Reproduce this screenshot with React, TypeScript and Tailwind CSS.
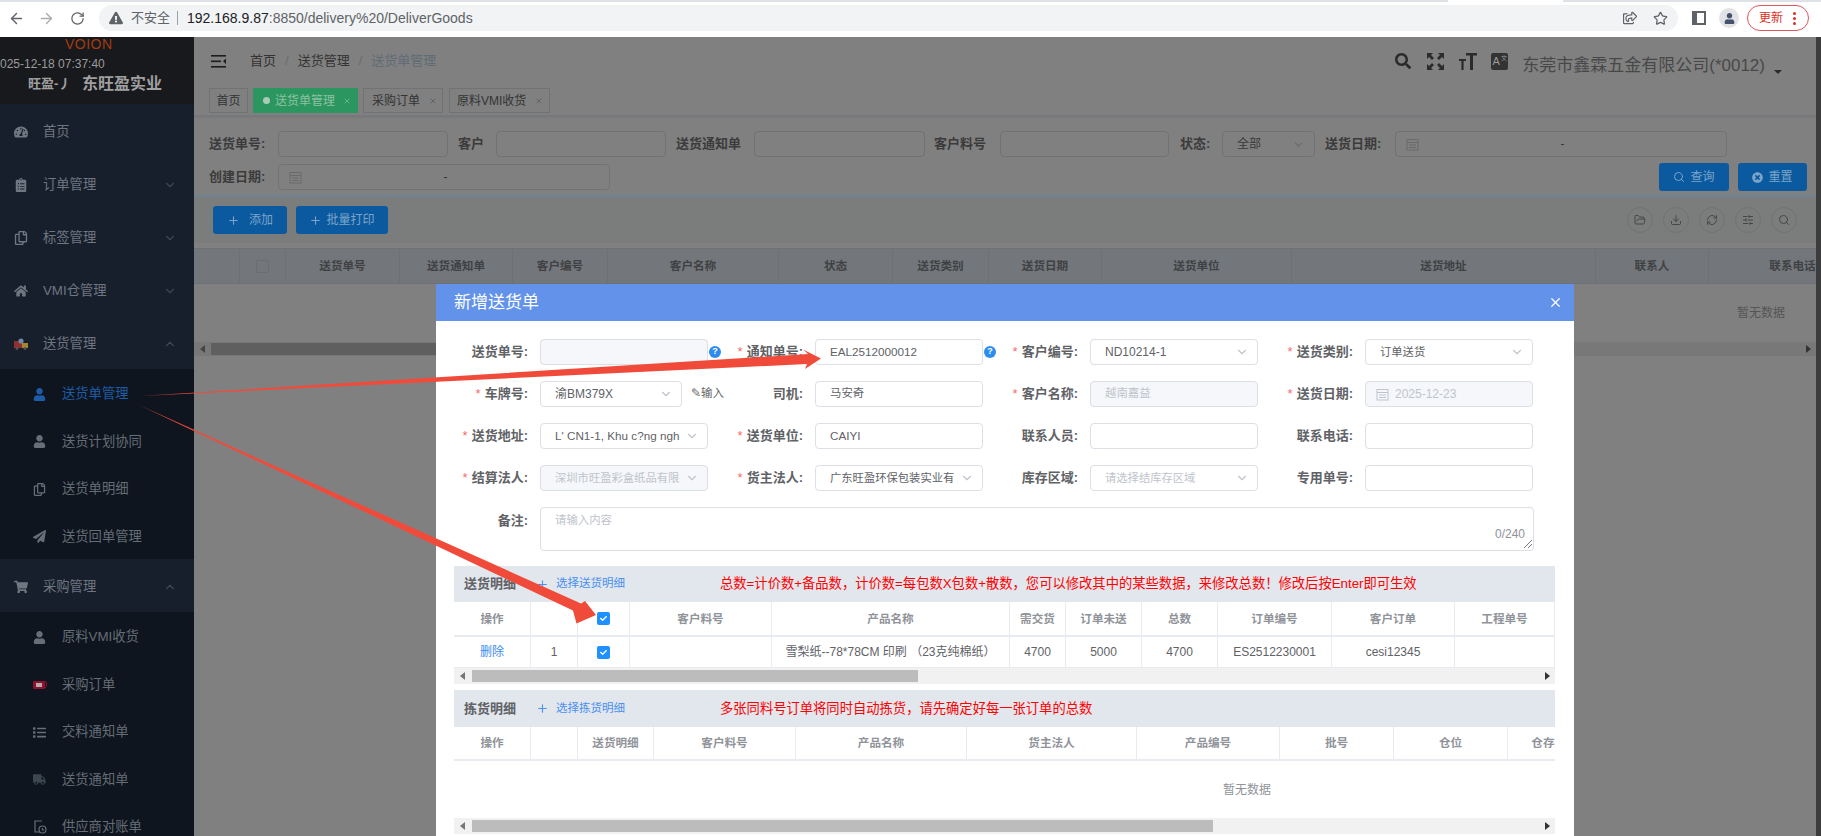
import { ArrowLeft, ArrowRight, ChevronDown, ChevronUp, Download, FolderOpen, Plus, RefreshCw, RotateCw, Search, SlidersHorizontal, Star, X } from "lucide-react";
import { ReactNode } from "react";
import { FaCheck, FaClipboardList, FaExclamationTriangle, FaHome, FaList, FaPaperPlane, FaRegCopy, FaRegShareSquare, FaSearch, FaShoppingCart, FaTachometerAlt, FaTimesCircle, FaTruck, FaUser } from "react-icons/fa";

// Small multi-colour drawings that the icon packages don't have
const DeliveryIcon = () => (
  <svg width="14" height="12" viewBox="0 0 14 12">
    <rect x="0" y="3" width="8" height="7" fill="#8f2f2f" />
    <rect x="8" y="5" width="6" height="5" fill="#a8852f" />
    <circle cx="7" cy="3" r="2.6" fill="#6f8aa8" />
    <circle cx="3" cy="10.5" r="1.4" fill="#555" />
    <circle cx="11" cy="10.5" r="1.4" fill="#555" />
  </svg>
);

const OrderIcon = () => (
  <svg width="14" height="10" viewBox="0 0 14 10">
    <rect x="0" y="1" width="12" height="8" rx="1" fill="#8c1230" />
    <rect x="3" y="3" width="6" height="4" fill="#b9a9a9" />
    <path d="M12 1c2 1 2 5 0 7" stroke="#8c1230" fill="none" />
  </svg>
);

const StatementIcon = () => (
  <svg width="14" height="14" viewBox="0 0 14 14" fill="none" stroke="#666e78" strokeWidth="1.2">
    <path d="M9 1H2v11h5" />
    <circle cx="9.5" cy="9.5" r="3.5" />
    <path d="M9.5 8v2h1.5" />
  </svg>
);

const mainMenu = [
  { label: "首页", icon: <FaTachometerAlt size={14} /> },
  { label: "订单管理", icon: <FaClipboardList size={14} />, arrow: "down" },
  { label: "标签管理", icon: <FaRegCopy size={14} />, arrow: "down" },
  { label: "VMI仓管理", icon: <FaHome size={14} />, arrow: "down" },
];

const deliveryMenu = [
  { label: "送货单管理", icon: <FaUser size={13} />, active: true },
  { label: "送货计划协同", icon: <FaUser size={13} /> },
  { label: "送货单明细", icon: <FaRegCopy size={13} /> },
  { label: "送货回单管理", icon: <FaPaperPlane size={13} /> },
];

const purchaseMenu = [
  { label: "原料VMI收货", icon: <FaUser size={13} /> },
  { label: "采购订单", icon: <OrderIcon /> },
  { label: "交料通知单", icon: <FaList size={13} /> },
  { label: "送货通知单", icon: <FaTruck size={13} className="text-[#3c4650]" /> },
  { label: "供应商对账单", icon: <StatementIcon /> },
];

const MenuHeader = ({ label, icon, arrow }: { label: string; icon: ReactNode; arrow?: string }) => (
  <div className="flex h-[53px] items-center bg-[#181f2c] pl-[14px] pr-[17px] pt-[2px] text-[13.3px] text-[#6e7680]">
    <span className="flex w-[29px] shrink-0 text-[#6f7882]">{icon}</span>
    <span className="flex-1">{label}</span>
    {arrow === "down" && <ChevronDown size={14} className="text-[#3e4753]" />}
    {arrow === "up" && <ChevronUp size={14} className="text-[#3e4753]" />}
  </div>
);

const SubItem = ({ label, icon, active }: { label: string; icon: ReactNode; active?: boolean }) => (
  <div className={`flex h-[47.5px] items-center pl-[33px] pt-[3px] text-[13.3px] ${active ? "text-[#1d5ca6]" : "text-[#656d76]"}`}>
    <span className={`flex w-[29px] shrink-0 ${active ? "text-[#1d5ca6]" : "text-[#666e78]"}`}>{icon}</span>
    <span>{label}</span>
  </div>
);

const Sidebar = () => (
  <aside className="w-[194px] shrink-0 overflow-hidden bg-[#181f2c]">
    <div className="h-[67px] overflow-hidden bg-[#18191d]">
      <div className="h-[14px] pl-[65px] text-[14px] leading-[14px] tracking-[0.5px] text-[#a23c12]">VOION</div>
      <div className="mt-[6px] h-[14px] whitespace-nowrap text-[12px] leading-[14px] text-[#9b9b9b]">025-12-18 07:37:40</div>
      <div className="mt-[4px] flex items-center whitespace-nowrap pl-[28px] font-bold leading-[18px] text-[#a0a0a0]">
        <span className="w-[54px] text-[13px]">旺盈-丿</span>
        <span className="text-[16px]">东旺盈实业</span>
      </div>
    </div>
    {mainMenu.map((item) => (
      <MenuHeader key={item.label} {...item} />
    ))}
    <MenuHeader label="送货管理" icon={<DeliveryIcon />} arrow="up" />
    <div className="bg-[#0f151e]">
      {deliveryMenu.map((item) => (
        <SubItem key={item.label} {...item} />
      ))}
    </div>
    <MenuHeader label="采购管理" icon={<FaShoppingCart size={14} />} arrow="up" />
    <div className="bg-[#0f151e]">
      {purchaseMenu.map((item) => (
        <SubItem key={item.label} {...item} />
      ))}
    </div>
  </aside>
);

const BrowserBar = () => (
  <div className="h-[37px] shrink-0 bg-white">
    <div className="flex h-[2px]">
      <div className="w-[1448px] bg-[#dee1e6]" />
      <div className="w-[115px] bg-white" />
      <div className="flex-1 bg-[#dee1e6]" />
    </div>
    <div className="flex h-[35px] items-center pb-[3px] pl-[8px]">
      <ArrowLeft size={17} className="text-[#5f6368]" />
      <ArrowRight size={17} className="ml-[13px] text-[#a9acb0]" />
      <RotateCw size={15} className="ml-[15px] text-[#5f6368]" />
      <div className="ml-[14px] flex h-[26px] w-[1579px] items-center rounded-full bg-[#f1f3f4] pl-[10px] pr-[10px]">
        <FaExclamationTriangle size={14} className="text-[#5f6368]" />
        <span className="ml-[8px] text-[13px] text-[#5f6368]">不安全</span>
        <span className="ml-[7px] h-[14px] w-px bg-[#9aa0a6]" />
        <span className="ml-[9px] text-[14px] text-[#202124]">192.168.9.87</span>
        <span className="text-[14px] text-[#5f6368]">:8850/delivery%20/DeliverGoods</span>
        <FaRegShareSquare size={14} className="ml-auto text-[#5f6368]" />
        <Star size={15} className="ml-[16px] text-[#5f6368]" />
      </div>
      <div className="ml-[14px] flex h-[14px] w-[14px] justify-end border-2 border-[#5f6368] bg-[#5f6368]">
        <div className="h-full w-[7px] bg-white" />
      </div>
      <div className="ml-[13px] flex h-[20px] w-[20px] items-center justify-center rounded-full bg-[#e1e3e6] text-[#46526b]">
        <FaUser size={11} />
      </div>
      <div className="ml-[8px] flex h-[26px] w-[62px] items-center rounded-full border border-[#e0565a] pl-[11px] text-[12px] text-[#d93025]">
        <span>更新</span>
        <span className="ml-[10px] flex flex-col gap-[2px]">
          <span className="h-[3px] w-[3px] rounded-full bg-[#d93025]" />
          <span className="h-[3px] w-[3px] rounded-full bg-[#d93025]" />
          <span className="h-[3px] w-[3px] rounded-full bg-[#d93025]" />
        </span>
      </div>
    </div>
  </div>
);

const TopNav = () => (
  <div className="flex h-[48px] items-center pl-[17px] pr-[34px]">
    <svg width="15" height="13" viewBox="0 0 15 13" fill="#1d1d1d">
      <rect width="15" height="1.6" />
      <rect y="5.5" width="10" height="1.6" />
      <rect y="11" width="15" height="1.6" />
      <path d="M15 3.5v5.6l-3-2.8z" />
    </svg>
    <span className="ml-[24px] text-[13px] text-[#333]">首页</span>
    <span className="ml-[9px] text-[13px] text-[#6a6a6a]">/</span>
    <span className="ml-[9px] text-[13px] text-[#333]">送货管理</span>
    <span className="ml-[9px] text-[13px] text-[#6a6a6a]">/</span>
    <span className="ml-[9px] text-[13px] text-[#5f6b77]">送货单管理</span>
    <FaSearch size={16} className="ml-auto text-[#2b2b2b]" />
    <svg width="17" height="17" viewBox="0 0 17 17" fill="#2b2b2b" className="ml-[16px]">
      <path d="M0 0h6L4 2l3 3-2 2-3-3-2 2zM17 0v6l-2-2-3 3-2-2 3-3-2-2zM0 17v-6l2 2 3-3 2 2-3 3 2 2zM17 17h-6l2-2-3-3 2-2 3 3 2-2z" />
    </svg>
    <svg width="18" height="17" viewBox="0 0 18 17" fill="#2b2b2b" className="ml-[15px]">
      <path d="M7 0h11v2.5h-4V17h-3V2.5H7zM0 6h7v2H4.6v9H2.4V8H0z" />
    </svg>
    <div className="ml-[14px] flex h-[17px] w-[17px] items-center justify-center gap-px rounded-[2px] bg-[#333] text-[11px] text-[#9a9a9a]">
      A<span className="mb-[5px] text-[6px]">文</span>
    </div>
    <span className="ml-[14px] mt-[9px] whitespace-nowrap text-[17px] text-[#484848]">东莞市鑫霖五金有限公司(*0012)</span>
    <span className="ml-[9px] mt-[22px] h-0 w-0 border-x-[4px] border-t-[4px] border-x-transparent border-t-[#2b2b2b]" />
  </div>
);

const TagBar = () => (
  <div className="flex h-[31px] gap-[5px] border-b border-[#747a80] pl-[15px] pt-[3px] text-[12px] shadow-[0_1px_2px_rgba(0,0,0,0.1)]">
    <div className="flex h-[25px] w-[39px] items-center justify-center border border-[#707275] text-[#333]">首页</div>
    <div className="flex h-[25px] w-[105px] items-center border border-[#2c9660] bg-[#2c9660] pl-[9px] text-[#8cc2a3]">
      <span className="mr-[5px] h-[7px] w-[7px] rounded-full bg-[#a8ccb8]" />
      送货单管理
      <X size={8} className="ml-[8px]" />
    </div>
    <div className="flex h-[25px] w-[80px] items-center border border-[#707275] pl-[8px] text-[#333]">
      采购订单
      <X size={8} className="ml-[9px] text-[#555]" />
    </div>
    <div className="ml-px flex h-[25px] w-[101px] items-center border border-[#707275] pl-[7px] text-[#333]">
      原料VMI收货
      <X size={8} className="ml-[9px] text-[#555]" />
    </div>
  </div>
);

const FilterLabel = ({ className, children }: { className: string; children: ReactNode }) => (
  <span className={`shrink-0 whitespace-nowrap text-[13px] font-bold text-[#3b3b3b] ${className}`}>{children}</span>
);

const FilterInput = ({ className }: { className: string }) => (
  <div className={`h-[26px] shrink-0 rounded-[4px] border border-[#727272] ${className}`} />
);

const CalendarGlyph = ({ color }: { color: string }) => (
  <svg width="13" height="13" viewBox="0 0 13 13" fill="none" stroke={color} strokeWidth="1">
    <rect x="1" y="1.5" width="11" height="10.5" />
    <path d="M1 4.5h11M3 7h7M3 9.5h7" />
  </svg>
);

const FilterDate = ({ className }: { className: string }) => (
  <div className={`flex h-[26px] shrink-0 items-center rounded-[4px] border border-[#727272] pl-[10px] ${className}`}>
    <CalendarGlyph color="#6a6a6a" />
    <span className="flex-1 pr-[20px] text-center text-[12px] text-[#333]">-</span>
  </div>
);

const FilterForm = () => (
  <div className="h-[81px] border-b-2 border-[#6f8296] pl-[15px] pt-[15px]">
    <div className="flex h-[26px] items-center">
      <FilterLabel className="w-[69px]">送货单号:</FilterLabel>
      <FilterInput className="w-[170px]" />
      <FilterLabel className="ml-[10px] w-[38px]">客户</FilterLabel>
      <FilterInput className="w-[170px]" />
      <FilterLabel className="ml-[10px] w-[78px]">送货通知单</FilterLabel>
      <FilterInput className="w-[171px]" />
      <FilterLabel className="ml-[9px] w-[66px]">客户料号</FilterLabel>
      <FilterInput className="w-[169px]" />
      <FilterLabel className="ml-[11px] w-[42px]">状态:</FilterLabel>
      <div className="flex h-[26px] w-[93px] shrink-0 items-center justify-between rounded-[4px] border border-[#727272] pl-[14px] pr-[9px] text-[12px] text-[#3a3a3a]">
        全部
        <ChevronDown size={13} className="text-[#6a6a6a]" />
      </div>
      <FilterLabel className="ml-[10px] w-[70px]">送货日期:</FilterLabel>
      <FilterDate className="w-[332px]" />
    </div>
    <div className="mt-[6px] flex h-[28px] items-center pr-[9px]">
      <FilterLabel className="w-[69px]">创建日期:</FilterLabel>
      <FilterDate className="w-[332px]" />
      <button className="ml-auto flex h-[28px] w-[70px] items-center justify-center gap-[5px] rounded-[3px] bg-[#0b5a9f] text-[12px] text-[#7ca4c8]">
        <Search size={12} />
        查询
      </button>
      <button className="ml-[9px] flex h-[28px] w-[69px] items-center justify-center gap-[5px] rounded-[3px] bg-[#0b5a9f] text-[12px] text-[#7ca4c8]">
        <FaTimesCircle size={11} />
        重置
      </button>
    </div>
  </div>
);

const toolIcons = [
  <FolderOpen size={12} />,
  <Download size={12} />,
  <RefreshCw size={12} />,
  <SlidersHorizontal size={12} />,
  <Search size={12} />,
];

const Toolbar = () => (
  <div className="flex h-[46px] items-center bg-[#7b7d7c] pl-[19px] pr-[19px]">
    <button className="flex h-[28px] w-[74px] items-center justify-center gap-[9px] rounded-[3px] bg-[#0b5a9f] text-[12px] text-[#7ca4c8]">
      <Plus size={13} />
      添加
    </button>
    <button className="ml-[9px] flex h-[28px] w-[92px] items-center justify-center gap-[4px] rounded-[3px] bg-[#0b5a9f] text-[12px] text-[#7ca4c8]">
      <Plus size={13} />
      批量打印
    </button>
    <div className="ml-auto flex gap-[10px]">
      {toolIcons.map((icon, index) => (
        <span key={index} className="flex h-[26px] w-[26px] items-center justify-center rounded-full border border-[#707274] text-[#444648]">
          {icon}
        </span>
      ))}
    </div>
  </div>
);

const backColumns = [
  { w: "w-[46px]", label: "" },
  { w: "w-[46px]", label: "check" },
  { w: "w-[114px]", label: "送货单号" },
  { w: "w-[113px]", label: "送货通知单" },
  { w: "w-[95px]", label: "客户编号" },
  { w: "w-[171px]", label: "客户名称" },
  { w: "w-[114px]", label: "状态" },
  { w: "w-[96px]", label: "送货类别" },
  { w: "w-[113px]", label: "送货日期" },
  { w: "w-[190px]", label: "送货单位" },
  { w: "w-[304px]", label: "送货地址" },
  { w: "w-[113px]", label: "联系人" },
  { w: "w-[168px]", label: "联系电话" },
];

const BackTable = () => (
  <div className="mt-[5px] overflow-hidden">
    <div className="flex h-[36px] w-[3134px] border-y border-[#6d7074] bg-[#73767a] text-[11.6px] font-semibold text-[#3f4144]">
      {backColumns.map((col) => (
        <div key={col.label} className={`flex shrink-0 items-center justify-center border-r border-[#6d7074] ${col.w}`}>
          {col.label === "check" ? <span className="h-[13px] w-[13px] rounded-[2px] border border-[#6a6d71]" /> : col.label}
        </div>
      ))}
    </div>
    <div className="flex h-[58px] w-[3134px] items-center justify-center text-[12px] text-[#555]">暂无数据</div>
    <div className="flex h-[14px] items-center bg-[#787878]">
      <span className="ml-[6px] h-0 w-0 border-y-[4px] border-r-[5px] border-y-transparent border-r-[#444]" />
      <span className="ml-[6px] h-[12px] w-[1300px] bg-[#5f5f5f]" />
      <span className="ml-auto mr-[5px] h-0 w-0 border-y-[4px] border-l-[5px] border-y-transparent border-l-[#333]" />
    </div>
  </div>
);

type FieldProps = { label: string; required?: boolean; children: ReactNode };

const Field = ({ label, required, children }: FieldProps) => (
  <div className="flex h-[26px] items-center">
    <label className="w-[92px] shrink-0 whitespace-nowrap text-right text-[13px] font-bold text-[#606266]">
      {required && <span className="mr-[4px] font-normal text-[#f56c6c]">*</span>}
      {label}:
    </label>
    <div className="ml-[12px] flex items-center">{children}</div>
  </div>
);

type BoxProps = { value?: string; disabled?: boolean; muted?: boolean; className?: string; size?: string };

const TextBox = ({ value, disabled, muted, className = "w-[168px]", size = "text-[11.7px]" }: BoxProps) => (
  <div
    className={`flex h-[26px] shrink-0 items-center overflow-hidden whitespace-nowrap rounded-[4px] border border-[#dcdfe6] pl-[14px] ${size} ${className} ${
      disabled ? "bg-[#f5f7fa]" : "bg-white"
    } ${muted || disabled ? "text-[#c0c4cc]" : "text-[#606266]"}`}
  >
    {value}
  </div>
);

const SelectBox = ({ value, disabled, muted, className = "w-[168px]", size = "text-[11.3px]" }: BoxProps) => (
  <div
    className={`flex h-[26px] shrink-0 items-center rounded-[4px] border border-[#dcdfe6] pl-[14px] pr-[8px] ${size} ${className} ${
      disabled ? "bg-[#f5f7fa]" : "bg-white"
    } ${muted || disabled ? "text-[#c0c4cc]" : "text-[#606266]"}`}
  >
    <span className="min-w-0 flex-1 overflow-hidden whitespace-nowrap">{value}</span>
    <ChevronDown size={14} className="ml-[5px] shrink-0 text-[#c0c4cc]" />
  </div>
);

const HelpDot = () => (
  <span className="ml-px flex h-[12px] w-[12px] shrink-0 items-center justify-center rounded-full bg-[#2d8cf0] text-[9px] font-bold text-white">?</span>
);

const ModalForm = () => (
  <div className="pt-[18px]">
    <div className="grid grid-cols-[repeat(4,275px)] gap-y-[16px]">
      <Field label="送货单号">
        <TextBox disabled />
        <HelpDot />
      </Field>
      <Field label="通知单号" required>
        <TextBox value="EAL2512000012" />
        <HelpDot />
      </Field>
      <Field label="客户编号" required>
        <SelectBox value="ND10214-1" size="text-[12px]" />
      </Field>
      <Field label="送货类别" required>
        <SelectBox value="订单送货" />
      </Field>

      <Field label="车牌号" required>
        <SelectBox value="渝BM379X" className="w-[142px]" size="text-[12px]" />
        <span className="ml-[9px] whitespace-nowrap text-[11.5px] text-[#666]">✎输入</span>
      </Field>
      <Field label="司机">
        <TextBox value="马安奇" size="text-[11.4px]" />
      </Field>
      <Field label="客户名称" required>
        <TextBox value="越南嘉益" disabled size="text-[11.4px]" />
      </Field>
      <Field label="送货日期" required>
        <div className="flex h-[26px] w-[168px] items-center rounded-[4px] border border-[#dcdfe6] bg-[#f5f7fa] pl-[10px] text-[12px] text-[#c0c4cc]">
          <CalendarGlyph color="#c0c4cc" />
          <span className="ml-[6px]">2025-12-23</span>
        </div>
      </Field>

      <Field label="送货地址" required>
        <SelectBox value="L' CN1-1, Khu c?ng ngh" size="text-[11.7px]" />
      </Field>
      <Field label="送货单位" required>
        <TextBox value="CAIYI" />
      </Field>
      <Field label="联系人员">
        <TextBox />
      </Field>
      <Field label="联系电话">
        <TextBox />
      </Field>

      <Field label="结算法人" required>
        <SelectBox value="深圳市旺盈彩盒纸品有限" disabled />
      </Field>
      <Field label="货主法人" required>
        <SelectBox value="广东旺盈环保包装实业有" />
      </Field>
      <Field label="库存区域">
        <SelectBox value="请选择结库存区域" muted />
      </Field>
      <Field label="专用单号">
        <TextBox />
      </Field>
    </div>
    <div className="mt-[16px] flex items-start">
      <label className="mt-[4px] w-[92px] shrink-0 text-right text-[13px] font-bold text-[#606266]">备注:</label>
      <div className="ml-[12px] flex h-[44px] w-[994px] flex-col rounded-[4px] border border-[#dcdfe6] pl-[14px] pr-[8px] pt-[5px] text-[11.4px] leading-[14px] text-[#c0c4cc]">
        请输入内容
        <div className="flex items-end justify-end">
          <span className="text-[12px] text-[#909399]">0/240</span>
        </div>
        <svg width="8" height="8" viewBox="0 0 8 8" stroke="#777" className="ml-auto mr-[-7px] mt-[-1px]">
          <path d="M8 0L0 8M8 4L4 8" />
        </svg>
      </div>
    </div>
  </div>
);

const SectionHead = ({ title, link, note, className }: { title: string; link: string; note: string; className: string }) => (
  <div className={`flex items-center bg-[#e2e6ed] pl-[10px] ${className}`}>
    <span className="w-[72px] shrink-0 text-[13px] font-bold text-[#606266]">{title}</span>
    <Plus size={13} className="shrink-0 text-[#4a90f0]" />
    <span className="ml-[7px] w-[164px] shrink-0 text-[11.5px] text-[#4a90f0]">{link}</span>
    <span className="whitespace-nowrap text-[13.3px] text-[#ff0000]">{note}</span>
  </div>
);

const Scroller = ({ thumb }: { thumb: string }) => (
  <div className="flex h-[16px] items-center bg-[#f1f1f1]">
    <span className="ml-[6px] h-0 w-0 border-y-[4px] border-r-[5px] border-y-transparent border-r-[#777]" />
    <span className={`ml-[7px] h-[12px] bg-[#bcbcbc] ${thumb}`} />
    <span className="ml-auto mr-[5px] h-0 w-0 border-y-[4px] border-l-[5px] border-y-transparent border-l-[#333]" />
  </div>
);

const HeadCell = ({ w, children }: { w: string; children?: ReactNode }) => (
  <div className={`flex shrink-0 items-center justify-center whitespace-nowrap border-r border-[#e8ecf0] text-[11.6px] font-semibold text-[#909399] ${w}`}>{children}</div>
);

const BodyCell = ({ w, className = "text-[#606266]", children }: { w: string; className?: string; children?: ReactNode }) => (
  <div className={`flex shrink-0 items-center justify-center whitespace-nowrap border-r border-[#e8ecf0] text-[12px] ${w} ${className}`}>{children}</div>
);

const Tick = () => (
  <span className="flex h-[13px] w-[13px] items-center justify-center rounded-[2px] bg-[#1e90ff] text-white">
    <FaCheck size={7} />
  </span>
);

const DeliverySection = () => (
  <div className="mt-[15px]">
    <SectionHead
      className="h-[36px]"
      title="送货明细"
      link="选择送货明细"
      note="总数=计价数+备品数，计价数=每包数X包数+散数，您可以修改其中的某些数据，来修改总数！修改后按Enter即可生效"
    />
    <div className="flex h-[35px] border-b-2 border-[#e8ecf0]">
      <HeadCell w="w-[77px]">操作</HeadCell>
      <HeadCell w="w-[47px]" />
      <HeadCell w="w-[52px]">
        <Tick />
      </HeadCell>
      <HeadCell w="w-[142px]">客户料号</HeadCell>
      <HeadCell w="w-[238px]">产品名称</HeadCell>
      <HeadCell w="w-[56px]">需交货</HeadCell>
      <HeadCell w="w-[76px]">订单未送</HeadCell>
      <HeadCell w="w-[76px]">总数</HeadCell>
      <HeadCell w="w-[114px]">订单编号</HeadCell>
      <HeadCell w="w-[123px]">客户订单</HeadCell>
      <HeadCell w="w-[100px]">工程单号</HeadCell>
    </div>
    <div className="flex h-[31px] border-b border-[#e8ecf0]">
      <BodyCell w="w-[77px]" className="text-[#3b8cf0]">
        删除
      </BodyCell>
      <BodyCell w="w-[47px]">1</BodyCell>
      <BodyCell w="w-[52px]">
        <Tick />
      </BodyCell>
      <BodyCell w="w-[142px]" />
      <BodyCell w="w-[238px]">雪梨纸--78*78CM 印刷 （23克纯棉纸）</BodyCell>
      <BodyCell w="w-[56px]">4700</BodyCell>
      <BodyCell w="w-[76px]">5000</BodyCell>
      <BodyCell w="w-[76px]">4700</BodyCell>
      <BodyCell w="w-[114px]">ES2512230001</BodyCell>
      <BodyCell w="w-[123px]">cesi12345</BodyCell>
      <BodyCell w="w-[100px]" />
    </div>
    <Scroller thumb="w-[446px]" />
  </div>
);

const PickingSection = () => (
  <div className="mt-[6px]">
    <SectionHead
      className="h-[37px]"
      title="拣货明细"
      link="选择拣货明细"
      note="多张同料号订单将同时自动拣货，请先确定好每一张订单的总数"
    />
    <div className="overflow-hidden">
      <div className="flex h-[34px] w-[1586px] border-b-2 border-[#e8ecf0]">
        <HeadCell w="w-[77px]">操作</HeadCell>
        <HeadCell w="w-[47px]" />
        <HeadCell w="w-[76px]">送货明细</HeadCell>
        <HeadCell w="w-[142px]">客户料号</HeadCell>
        <HeadCell w="w-[171px]">产品名称</HeadCell>
        <HeadCell w="w-[170px]">货主法人</HeadCell>
        <HeadCell w="w-[143px]">产品编号</HeadCell>
        <HeadCell w="w-[114px]">批号</HeadCell>
        <HeadCell w="w-[114px]">仓位</HeadCell>
        <HeadCell w="w-[94px]">仓存数量</HeadCell>
      </div>
      <div className="flex h-[57px] w-[1586px] items-center justify-center text-[12px] text-[#909399]">暂无数据</div>
    </div>
    <Scroller thumb="w-[741px]" />
  </div>
);

const Modal = () => (
  <div className="absolute bottom-0 left-[436px] top-[284px] w-[1138px] overflow-hidden bg-white">
    <div className="flex h-[37px] items-center justify-between bg-[#6292ea] pl-[18px] pr-[11px] text-white">
      <span className="text-[17px]">新增送货单</span>
      <X size={15} />
    </div>
    <ModalForm />
    <div className="ml-[18px] w-[1101px]">
      <DeliverySection />
      <PickingSection />
    </div>
  </div>
);

// The red arrows someone drew over the screenshot
const Annotations = () => (
  <svg className="pointer-events-none absolute left-0 top-0" width="1821" height="836" fill="#f04b3a">
    <polygon points="140,396 808,354 803,349.5 821,358.5 805,369 807,364" />
    <polygon points="139,405 581,603.5 585,601 596,615 576.5,623.5 573,610.5" />
  </svg>
);

export default function App() {
  return (
    <div className="relative flex h-[836px] w-[1821px] flex-col overflow-hidden bg-[#808080] font-['Liberation_Sans','Noto_Sans_CJK_SC',sans-serif]">
      <BrowserBar />
      <div className="flex min-h-0 flex-1">
        <Sidebar />
        <main className="min-w-0 flex-1">
          <TopNav />
          <TagBar />
          <FilterForm />
          <Toolbar />
          <BackTable />
        </main>
        <div className="w-[5px] shrink-0 bg-[#3c3c3c]" />
      </div>
      <Modal />
      <Annotations />
    </div>
  );
}
